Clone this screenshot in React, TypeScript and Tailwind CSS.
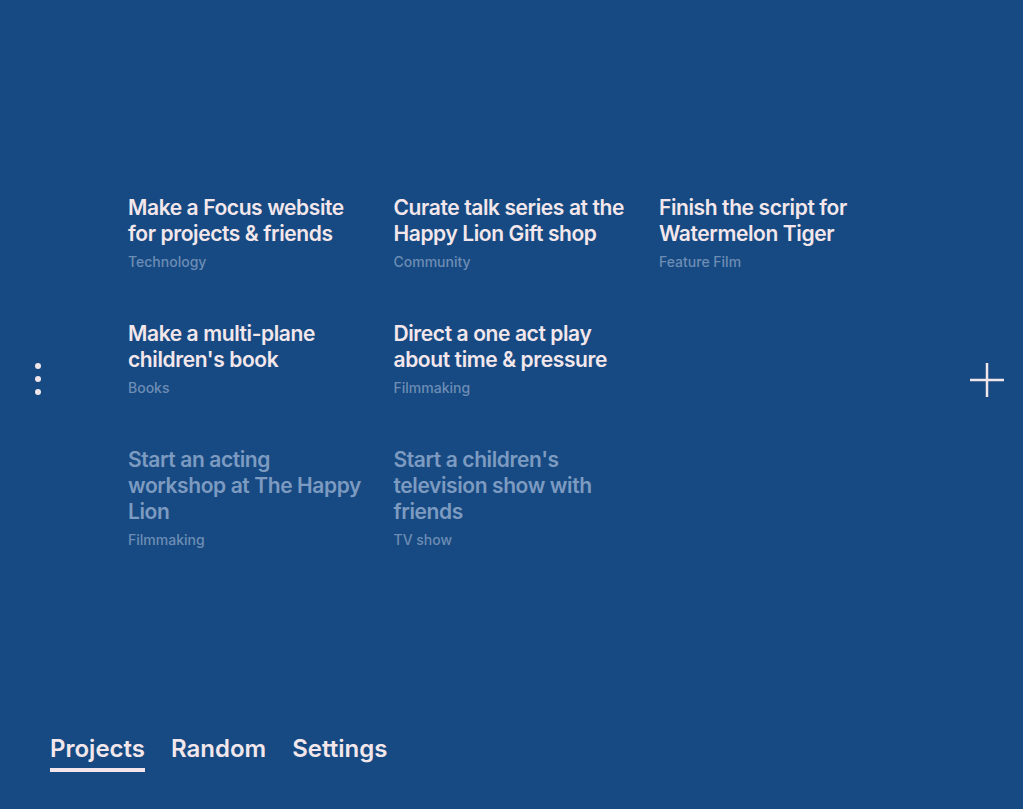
import { useState } from 'react';

interface Project {
  title: string;
  category: string;
  faded?: boolean;
}

// null marks an empty slot in the grid
const projects: (Project | null)[] = [
  { title: 'Make a Focus website for projects & friends', category: 'Technology' },
  { title: 'Curate talk series at the Happy Lion Gift shop', category: 'Community' },
  { title: 'Finish the script for Watermelon Tiger', category: 'Feature Film' },
  { title: "Make a multi-plane children's book", category: 'Books' },
  { title: 'Direct a one act play about time & pressure', category: 'Filmmaking' },
  null,
  { title: 'Start an acting workshop at The Happy Lion', category: 'Filmmaking', faded: true },
  { title: "Start a children's television show with friends", category: 'TV show', faded: true },
];

const tabs = ['Projects', 'Random', 'Settings'];

function ProjectCard({ project }: { project: Project }) {
  return (
    <div>
      <p
        className={
          'text-[21px] leading-[26px] font-semibold tracking-[-0.4px] ' +
          (project.faded ? 'text-[#7d9bc1]' : 'text-[#f3e7ec]')
        }
      >
        {project.title}
      </p>
      <p className="mt-[7px] text-[14px] leading-[16px] font-medium text-[#6d8db5]">
        {project.category}
      </p>
    </div>
  );
}

export default function App() {
  const [active, setActive] = useState('Projects');

  return (
    <div
      className="h-[809px] w-full overflow-hidden bg-[#174a82] flex flex-col"
      style={{ fontFamily: 'Inter, "Noto Sans", sans-serif' }}
    >
      {/* Main area */}
      <div className="h-[734px] flex items-start pt-[195px]">
        <div className="w-[128px] pl-[35px] pt-[168px]">
          <div className="flex flex-col gap-[7px]">
            <span className="block w-[6px] h-[6px] rounded-full bg-[#f0e6ea]" />
            <span className="block w-[6px] h-[6px] rounded-full bg-[#f0e6ea]" />
            <span className="block w-[6px] h-[6px] rounded-full bg-[#f0e6ea]" />
          </div>
        </div>

        <div className="grid grid-cols-[240px_240px_240px] gap-x-[25.5px] gap-y-[51px]">
          {projects.map((p, i) =>
            p ? <ProjectCard key={p.title} project={p} /> : <div key={i} />
          )}
        </div>

        <div className="ml-auto mr-[19px] pt-[168px]">
          <svg width="34" height="34" viewBox="0 0 34 34" fill="none">
            <path d="M17 0v34M0 17h34" stroke="#f0e6ea" strokeWidth="2.5" />
          </svg>
        </div>
      </div>

      {/* Bottom nav */}
      <div className="flex gap-[26px] pl-[50px]">
        {tabs.map(t => (
          <button
            key={t}
            onClick={() => setActive(t)}
            className="flex flex-col items-stretch text-[24px] leading-[30px] font-semibold text-[#f3e7ec]"
          >
            <span>{t}</span>
            <span
              className={
                'mt-[4px] h-[4px] ' + (active === t ? 'bg-[#f3e7ec]' : 'bg-transparent')
              }
            />
          </button>
        ))}
      </div>
    </div>
  );
}
